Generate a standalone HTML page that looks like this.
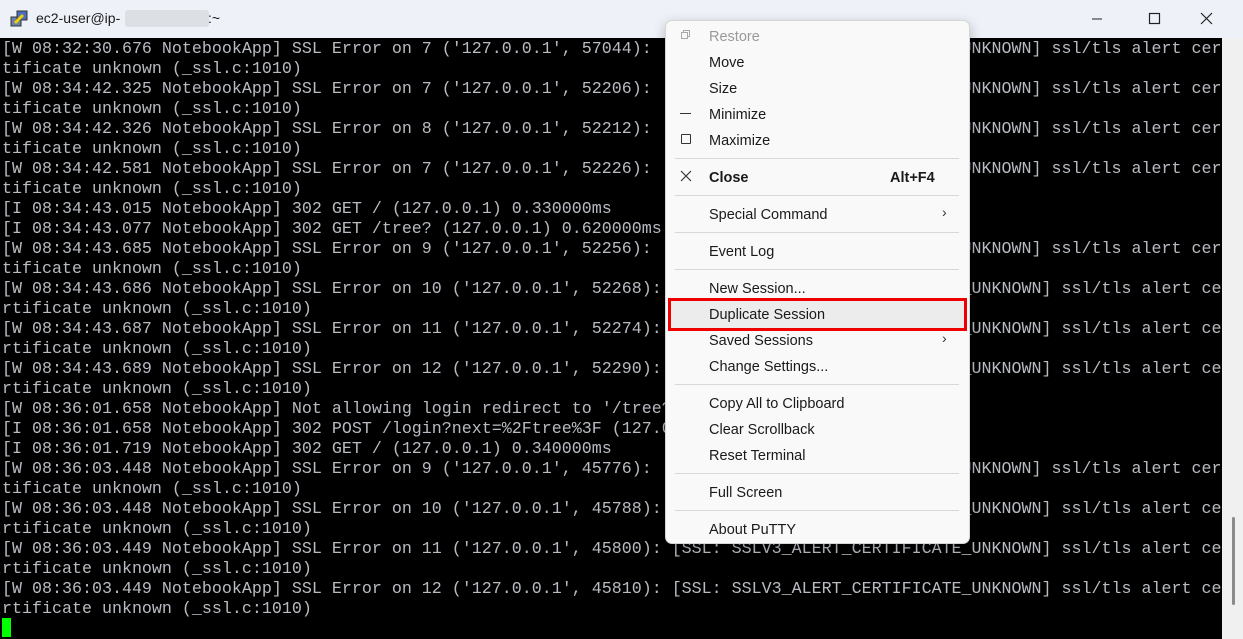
<!DOCTYPE html>
<html><head><meta charset="utf-8"><style>
*{margin:0;padding:0;box-sizing:border-box}
body{width:1243px;height:639px;overflow:hidden;background:#eff4f9;position:relative;font-family:"Liberation Sans",sans-serif}
#title{position:absolute;left:0;top:0;width:1243px;height:38px;background:#eef2f8}
#title .t{position:absolute;left:36px;top:10px;font-size:14px;color:#1a1a1a}
#blur{position:absolute;left:125px;top:10px;width:84px;height:17px;background:#dcdfe4;border-radius:3px}
#term{position:absolute;left:0;top:38px;width:1222px;height:601px;background:#000;overflow:hidden}
#term pre{position:absolute;left:2px;top:2px;font-family:"Liberation Mono",monospace;font-size:16.67px;line-height:20px;color:#b8bcc2;white-space:pre}
#sb{position:absolute;left:1222px;top:38px;width:21px;height:601px;background:#f0f0f0}
#thumb{position:absolute;left:1232px;top:517px;width:3px;height:88px;background:#8a8a8a;border-radius:2px}
#cur{position:absolute;left:2px;top:618px;width:9px;height:19px;background:#00ff00}
#menu{position:absolute;left:665px;top:20px;width:305px;height:524px;background:#f9f9f9;border:1px solid #d6d6d6;border-radius:7px;box-shadow:0 4px 12px rgba(0,0,0,.25)}
.it{position:absolute;left:43px;font-size:14.5px;color:#1a1a1a;line-height:18px;margin-top:1px}
.sep{position:absolute;left:9px;width:284px;height:1px;background:#d8d8d8}
.arr{position:absolute;left:276px;font-size:14px;color:#333}
#hl{position:absolute;left:2px;top:277px;width:299px;height:33px;background:#ececec;border:3px solid #ee0000}
</style></head><body>
<div id="title">
<svg style="position:absolute;left:9px;top:9px" width="20" height="20" viewBox="0 0 20 20"><rect x="2" y="8" width="10" height="9" fill="#6b7fb0" stroke="#333" stroke-width="1"/><rect x="8" y="2" width="10" height="9" fill="#4a6dc0" stroke="#333" stroke-width="1"/><path d="M6 14 L14 6" stroke="#f2d000" stroke-width="3"/></svg>
<span class="t">ec2-user@ip-</span><div id="blur"></div><span class="t" style="left:208px">:~</span>
<svg style="position:absolute;left:1092px;top:12px" width="140" height="14"><line x1="0" y1="7" x2="10" y2="7" stroke="#222"/><rect x="57.5" y="1.5" width="10" height="10" fill="none" stroke="#222" stroke-width="1.2"/><path d="M109 1 L120 12 M120 1 L109 12" stroke="#222" stroke-width="1.2"/></svg>
</div>
<div id="term"><pre>[W 08:32:30.676 NotebookApp] SSL Error on 7 ('127.0.0.1', 57044): [SSL: SSLV3_ALERT_CERTIFICATE_UNKNOWN] ssl/tls alert cer
tificate unknown (_ssl.c:1010)
[W 08:34:42.325 NotebookApp] SSL Error on 7 ('127.0.0.1', 52206): [SSL: SSLV3_ALERT_CERTIFICATE_UNKNOWN] ssl/tls alert cer
tificate unknown (_ssl.c:1010)
[W 08:34:42.326 NotebookApp] SSL Error on 8 ('127.0.0.1', 52212): [SSL: SSLV3_ALERT_CERTIFICATE_UNKNOWN] ssl/tls alert cer
tificate unknown (_ssl.c:1010)
[W 08:34:42.581 NotebookApp] SSL Error on 7 ('127.0.0.1', 52226): [SSL: SSLV3_ALERT_CERTIFICATE_UNKNOWN] ssl/tls alert cer
tificate unknown (_ssl.c:1010)
[I 08:34:43.015 NotebookApp] 302 GET / (127.0.0.1) 0.330000ms
[I 08:34:43.077 NotebookApp] 302 GET /tree? (127.0.0.1) 0.620000ms
[W 08:34:43.685 NotebookApp] SSL Error on 9 ('127.0.0.1', 52256): [SSL: SSLV3_ALERT_CERTIFICATE_UNKNOWN] ssl/tls alert cer
tificate unknown (_ssl.c:1010)
[W 08:34:43.686 NotebookApp] SSL Error on 10 ('127.0.0.1', 52268): [SSL: SSLV3_ALERT_CERTIFICATE_UNKNOWN] ssl/tls alert ce
rtificate unknown (_ssl.c:1010)
[W 08:34:43.687 NotebookApp] SSL Error on 11 ('127.0.0.1', 52274): [SSL: SSLV3_ALERT_CERTIFICATE_UNKNOWN] ssl/tls alert ce
rtificate unknown (_ssl.c:1010)
[W 08:34:43.689 NotebookApp] SSL Error on 12 ('127.0.0.1', 52290): [SSL: SSLV3_ALERT_CERTIFICATE_UNKNOWN] ssl/tls alert ce
rtificate unknown (_ssl.c:1010)
[W 08:36:01.658 NotebookApp] Not allowing login redirect to '/tree?'
[I 08:36:01.658 NotebookApp] 302 POST /login?next=%2Ftree%3F (127.0.0.1) 1.000000ms
[I 08:36:01.719 NotebookApp] 302 GET / (127.0.0.1) 0.340000ms
[W 08:36:03.448 NotebookApp] SSL Error on 9 ('127.0.0.1', 45776): [SSL: SSLV3_ALERT_CERTIFICATE_UNKNOWN] ssl/tls alert cer
tificate unknown (_ssl.c:1010)
[W 08:36:03.448 NotebookApp] SSL Error on 10 ('127.0.0.1', 45788): [SSL: SSLV3_ALERT_CERTIFICATE_UNKNOWN] ssl/tls alert ce
rtificate unknown (_ssl.c:1010)
[W 08:36:03.449 NotebookApp] SSL Error on 11 ('127.0.0.1', 45800): [SSL: SSLV3_ALERT_CERTIFICATE_UNKNOWN] ssl/tls alert ce
rtificate unknown (_ssl.c:1010)
[W 08:36:03.449 NotebookApp] SSL Error on 12 ('127.0.0.1', 45810): [SSL: SSLV3_ALERT_CERTIFICATE_UNKNOWN] ssl/tls alert ce
rtificate unknown (_ssl.c:1010)</pre></div>
<div id="sb"></div><div id="thumb"></div>
<div id="cur"></div>
<div id="menu">
<div id="hl"></div>
<svg style="position:absolute;left:14px;top:8px" width="12" height="12"><rect x="1.5" y="3.5" width="6" height="6" fill="none" stroke="#aaa"/><path d="M3.5 3.5 V1.5 H9.5 V7.5 H7.5" fill="none" stroke="#aaa"/></svg>
<div class="it" style="top:6px;color:#9a9a9a">Restore</div>
<div class="it" style="top:32px">Move</div>
<div class="it" style="top:58px">Size</div>
<div style="position:absolute;left:14px;top:92px;width:11px;height:1px;background:#333"></div>
<div class="it" style="top:84px">Minimize</div>
<div style="position:absolute;left:15px;top:113px;width:10px;height:10px;border:1.5px solid #333;border-radius:1px"></div>
<div class="it" style="top:110px">Maximize</div>
<div class="sep" style="top:137px"></div>
<svg style="position:absolute;left:14px;top:149px" width="12" height="12"><path d="M1 1 L11 11 M11 1 L1 11" stroke="#333" stroke-width="1.2"/></svg>
<div class="it" style="top:147px;font-weight:bold">Close</div>
<div class="it" style="top:147px;left:224px;font-weight:bold">Alt+F4</div>
<div class="sep" style="top:174px"></div>
<div class="it" style="top:184px">Special Command</div><div class="arr" style="top:183px">›</div>
<div class="sep" style="top:211px"></div>
<div class="it" style="top:221px">Event Log</div>
<div class="sep" style="top:248px"></div>
<div class="it" style="top:258px">New Session...</div>
<div class="it" style="top:284px">Duplicate Session</div>
<div class="it" style="top:310px">Saved Sessions</div><div class="arr" style="top:309px">›</div>
<div class="it" style="top:336px">Change Settings...</div>
<div class="sep" style="top:363px"></div>
<div class="it" style="top:373px">Copy All to Clipboard</div>
<div class="it" style="top:399px">Clear Scrollback</div>
<div class="it" style="top:425px">Reset Terminal</div>
<div class="sep" style="top:452px"></div>
<div class="it" style="top:462px">Full Screen</div>
<div class="sep" style="top:489px"></div>
<div class="it" style="top:499px">About PuTTY</div>
</div>
</body></html>
